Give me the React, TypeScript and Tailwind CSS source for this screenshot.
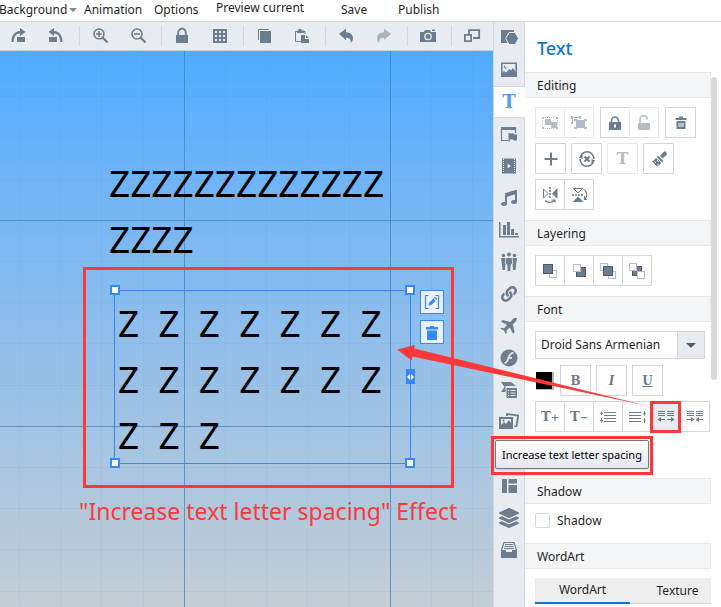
import React from 'react';
import { FaLayerGroup, FaLink, FaMusic } from 'react-icons/fa';

type IconProps = { children: React.ReactNode; className?: string };

const Icon = ({ children, className = 'h-5 w-5' }: IconProps) => (
    <svg viewBox="0 0 20 20" className={`shrink-0 ${className}`} fill="currentColor" aria-hidden="true">
        {children}
    </svg>
);

const SerifT = ({ suffix = '', className = 'text-[16px]' }: { suffix?: string; className?: string }) => (
    <span className={`font-['DejaVu_Serif',serif] font-bold leading-none ${className}`}>
        T{suffix && <span className="text-[10px]">{suffix}</span>}
    </span>
);

/* ---------- top bars ---------- */

const ZoomGlass = ({ plus = false }: { plus?: boolean }) => (
    <Icon>
        <circle cx="9" cy="8" r="5" fill="none" stroke="currentColor" strokeWidth="1.6" />
        <path d="M12.5 11.5l5 5" stroke="currentColor" strokeWidth="2.2" />
        <path d={plus ? 'M6 8h6M9 5v6' : 'M6 8h6'} stroke="currentColor" strokeWidth="1.6" />
    </Icon>
);

const curvedArrow = 'M3 8l7-5.500v3.700c4.500.2 7 2.600 7 6 0 2-.8 3.600-2.400 4.800.6-3.400-.8-5-4.600-5.200V14z';

const toolGroups = [
    [
        {
            name: 'Rotate right',
            icon: <Icon><path d="M9 11h8v5H9zM12 2l5.500 4-5.500 4V7.400C8 7.500 6 10.500 5.700 16H3.500C3.500 9.500 6.500 5.400 12 5z" /></Icon>,
        },
        {
            name: 'Rotate left',
            icon: <Icon><path d="M3 11h8v5H3zM8 2L2.500 6 8 10V7.400c4 .1 6 3.100 6.300 8.600h2.200C16.500 9.500 13.500 5.400 8 5z" /></Icon>,
        },
    ],
    [
        { name: 'Zoom in', icon: <ZoomGlass plus /> },
        { name: 'Zoom out', icon: <ZoomGlass /> },
    ],
    [
        {
            name: 'Lock canvas',
            icon: <Icon><path d="M4 9h12v8H4z" /><path d="M6.200 9V6.500a3.800 3.800 0 0 1 7.600 0V9" fill="none" stroke="currentColor" strokeWidth="1.800" /></Icon>,
        },
        {
            name: 'Grid',
            icon: <Icon><path fillRule="evenodd" d="M3 3h14v14H3zM5 5v2h2V5zM9 5v2h2V5zM13 5v2h2V5zM5 9v2h2V9zM9 9v2h2V9zM13 9v2h2V9zM5 13v2h2v-2zM9 13v2h2v-2zM13 13v2h2v-2z" /></Icon>,
        },
    ],
    [
        { name: 'Copy', icon: <Icon><path d="M6 5h11v12H6z" /><path d="M4.500 14V3.500H15" fill="none" stroke="currentColor" /></Icon> },
        {
            name: 'Paste',
            icon: (
                <Icon>
                    <path d="M9 15.500H3.500V5.500H6M11 5.500h2V8" fill="none" stroke="currentColor" />
                    <path d="M5 4.500h1.500V3h3v1.500H12V7H5zM9 9h4v4h4v4H9zM14 9l3 3h-3z" />
                </Icon>
            ),
        },
    ],
    [
        { name: 'Undo', icon: <Icon><path d={curvedArrow} /></Icon> },
        { name: 'Redo', icon: <Icon className="h-5 w-5 -scale-x-100 opacity-50"><path d={curvedArrow} /></Icon> },
    ],
    [
        {
            name: 'Screenshot',
            icon: (
                <Icon>
                    <path d="M2 6h4l1-2h5l1 2h5v10H2z" />
                    <circle cx="10" cy="10.500" r="3.200" fill="none" stroke="#e8ebf0" strokeWidth="1.300" />
                    <path d="M14 3.500h3V5h-3z" />
                </Icon>
            ),
        },
    ],
    [
        {
            name: 'Window size',
            icon: <Icon><path d="M7 8V4.200h10.200V12H11M2.900 8.900h6.200v6.200H2.900z" fill="none" stroke="currentColor" strokeWidth="1.800" /></Icon>,
        },
    ],
];

const MenuBar = () => (
    <nav className="flex h-[22px] items-start overflow-hidden whitespace-nowrap border-b border-[#d2d6dc] bg-white text-[12px] leading-5 text-[#1f1f1f]">
        <a href="#background" className="-ml-px flex w-[85px] items-center">
            Background
            <svg viewBox="0 0 8 4" className="ml-0.5 h-1 w-2" fill="#7b8794"><path d="M0 0h8L4 4z" /></svg>
        </a>
        <a href="#animation" className="w-[70px]">Animation</a>
        <a href="#options" className="w-[62px]">Options</a>
        <a href="#preview" className="w-[125px] leading-4">Preview current</a>
        <a href="#save" className="w-[57px]">Save</a>
        <a href="#publish">Publish</a>
    </nav>
);

const Toolbar = () => (
    <div className="flex h-[29px] items-center overflow-hidden border-b border-[#c9cfd6] bg-[#e8ebf0] text-[#6b7d8e]">
        <div className="-ml-px flex items-center">
            {toolGroups.map((group, i) => (
                <React.Fragment key={i}>
                    {i > 0 && <span className="ml-1 mr-px h-5 w-px shrink-0 bg-[#d3d7dd]" />}
                    {group.map((tool) => (
                        <button key={tool.name} aria-label={tool.name} className="flex h-7 w-[38px] shrink-0 items-center justify-center">
                            {tool.icon}
                        </button>
                    ))}
                </React.Fragment>
            ))}
        </div>
    </div>
);

/* ---------- canvas ---------- */

const Handle = ({ className }: { className: string }) => (
    <span className={`absolute h-2.5 w-2.5 border-2 border-[#3388ff] bg-white ${className}`} />
);

const Canvas = () => (
    <main className="relative flex-1 overflow-hidden bg-linear-to-b from-[#4fabff] to-[#c4cdd4] font-['Noto_Sans',sans-serif]">
        <svg className="absolute inset-0 h-full w-full" aria-hidden="true">
            <defs>
                <pattern id="grid" x="184" y="169" width="206" height="206" patternUnits="userSpaceOnUse">
                    <path d="M41.500 0v206M82.500 0v206M123.500 0v206M165.500 0v206M0 41.500h206M0 82.500h206M0 123.500h206M0 165.500h206" stroke="#3a7fb8" strokeOpacity=".08" />
                    <path d="M.5 0v206M0 .5h206" stroke="#3a82c0" strokeOpacity=".75" />
                </pattern>
            </defs>
            <rect width="100%" height="100%" fill="url(#grid)" />
        </svg>

        <div className="absolute left-[109px] top-[104px] text-[37px] leading-[56px] text-black">
            ZZZZZZZZZZZZZ<br />ZZZZ
        </div>

        {/* Selected text box */}
        <div className="absolute left-[114px] top-[239px] h-[174px] w-[297px] whitespace-pre border border-[#3388ff] pl-[3px] pt-1 text-[37px] leading-[56px] text-black">
            <div>Z  Z  Z  Z  Z  Z  Z</div>
            <div>Z  Z  Z  Z  Z  Z  Z</div>
            <div>Z  Z  Z</div>
            <Handle className="-left-[5px] -top-1.5" />
            <Handle className="-right-[5px] -top-1.5" />
            <Handle className="-bottom-[5px] -left-[5px]" />
            <Handle className="-bottom-[5px] -right-[5px]" />
            <span className="absolute -right-[5px] top-[78px] flex h-[15px] w-[9px] items-center bg-[#3388ff]">
                <svg viewBox="0 0 9 6" className="h-1.5 w-[9px]" fill="#fff"><path d="M4 0v6L1 3zM5 0v6l3-3z" /></svg>
            </span>
        </div>
        <div className="absolute left-[420px] top-[239px] flex flex-col gap-1.5 text-[#3388ff]">
            <button aria-label="Edit text" className="h-6 w-6 border border-[#3388ff] bg-[#e8f1fd] p-px">
                <Icon>
                    <path d="M6.500 3.500h-3v13h3M13.500 3.500h3v13h-3" fill="none" stroke="currentColor" strokeWidth="1.200" />
                    <path d="M6.500 13.500l.6-2.800 4.200-4.200 2.200 2.200-4.200 4.200zM12 5.800l1-1 2.200 2.200-1 1z" />
                </Icon>
            </button>
            <button aria-label="Delete" className="h-6 w-6 border border-[#3388ff] bg-[#e8f1fd] p-px">
                <Icon><path d="M4 5h4V4h4v1h4v2.500H4zM5 8.500h10v9.500H5z" /></Icon>
            </button>
        </div>

        <p className="absolute left-[79px] top-[445px] whitespace-nowrap text-[23px] leading-[30px] text-[#fc3938]">
            "Increase text letter spacing" Effect
        </p>
    </main>
);

/* ---------- side rail ---------- */

const railItems = [
    {
        name: 'Shapes',
        icon: <Icon><path d="M2 2h13v13H2z" /><path d="M10 4.500h6.200l3.300 6-3.300 6H10l-3.300-6z" stroke="#e8ebf0" /></Icon>,
    },
    {
        name: 'Image',
        icon: (
            <Icon>
                <path d="M2.800 3.300h14.400v13H2.800z" fill="none" stroke="currentColor" strokeWidth="1.600" />
                <path d="M3 16v-3l2-2 2 1.500L10.500 9l1.500 1.500 2-2.500 3 4.500V16zM6 5a1.800 1.800 0 1 0 2.200 2.600A2 2 0 0 1 6 5z" />
            </Icon>
        ),
    },
    { name: 'Text', icon: <SerifT className="text-[18px] text-[#4ba1f5]" /> },
    {
        name: 'Callout',
        icon: <Icon><path d="M9 16.500H2.500v-13h14V9" fill="none" stroke="currentColor" strokeWidth="1.200" /><path d="M2 3h15v3H2zM9.500 9h1.200v.5h4l1 1H18v6h-3l-1-1h-3.300V18H9.500z" /></Icon>,
    },
    {
        name: 'Video',
        icon: (
            <Icon>
                <path d="M3 2.500h14v15H3z" />
                <path d="M4.500 3v14M15.500 3v14" stroke="#e8ebf0" strokeDasharray="1 1" />
                <path d="M8.500 7.500v5l3.500-2.500z" fill="#e8ebf0" />
            </Icon>
        ),
    },
    { name: 'Music', icon: <FaMusic className="h-4 w-4" /> },
    {
        name: 'Chart',
        icon: <Icon><path d="M0 2h1.500v14H0zM0 16h20v1.500H0zM4 5h3v10H4zM8 2h3v13H8zM12 9h3v6h-3zM16 13h3v2h-3z" /></Icon>,
    },
    {
        name: 'Roles',
        icon: (
            <Icon>
                <circle cx="4.500" cy="3.500" r="1.800" />
                <circle cx="15.500" cy="3.500" r="1.800" />
                <circle cx="10" cy="2.500" r="2" />
                <path d="M2 6h4.500l1 2-1.200 5-.3 5H3.500L3 13zM18 6h-4.500l-1 2 1.200 5 .3 5h2.500l.5-5z" />
                <path d="M7 5.500h6l.8 6-1.800 1-.3 7H8.300l-.3-7-1.800-1z" stroke="#e8ebf0" strokeWidth=".8" />
            </Icon>
        ),
    },
    { name: 'Link', icon: <FaLink className="h-4 w-4" /> },
    {
        name: 'Animation path',
        icon: <Icon><path d="M17.500 2c-1.500-.6-3 .5-4 1.500L11.300 6 3.500 4 2 5.500l6 3.600-3 3.200-2.500-.5-1 1L5 14.500 6.800 18l1-1-.3-2.500 3.200-3 3.300 6.200 1.600-1.500-1.800-8L16.300 6c1-1 2-2.600 1.200-4z" /></Icon>,
    },
    {
        name: 'Flash',
        icon: (
            <Icon>
                <circle cx="10" cy="10" r="8.500" />
                <path d="M14.500 4.800c-3.500 0-4.200 2.600-5 5.200-.7 2.600-1.400 4.700-4 5M8.500 9.800H13" fill="none" stroke="#e8ebf0" strokeWidth="1.800" />
            </Icon>
        ),
    },
    {
        name: 'Formula',
        icon: (
            <Icon>
                <path d="M2 2h10l5 4H6.500v6H2l3.500-5z" />
                <path d="M7.500 8H18v10H7.500z" />
                <path d="M9 10.500h1M11.500 10.500h5M9 13h1M11.500 13h5M9 15.500h1M11.500 15.500h5" stroke="#e8ebf0" />
            </Icon>
        ),
    },
    {
        name: 'Gallery',
        icon: (
            <Icon>
                <path d="M8 4V2l11.300 1.500L17.500 14l-2 .5" fill="none" stroke="currentColor" strokeWidth="1.800" />
                <path fillRule="evenodd" d="M0 5h14v12H0zM2 7v6l3-3 2 2 3-4 2 3V7z" />
                <circle cx="4.500" cy="8.500" r="1" />
            </Icon>
        ),
    },
    { name: 'Table', icon: <Icon><path d="M2 3h16v14H2z" /></Icon> },
    { name: 'Layout', icon: <Icon><path d="M3 3h5v14H3zM9.500 3H18v4.500H9.500zM9.500 9H18v8H9.500z" /></Icon> },
    { name: 'Layers', icon: <FaLayerGroup className="h-5 w-5" /> },
    {
        name: 'Archive',
        icon: (
            <Icon>
                <path d="M2.500 10L5 2.500h10L17.500 10" fill="none" stroke="currentColor" strokeWidth="1.200" />
                <path d="M6 4.500h8M5.500 6.500h9M5 8.500h10" stroke="currentColor" />
                <path d="M2 10h5v2h6v-2h5v8H2z" />
            </Icon>
        ),
    },
];

const Rail = () => (
    <aside className="flex w-8 shrink-0 flex-col border-l border-[#d2d6dc] bg-[#e8ebf0] text-[#6b7d8e]">
        {railItems.map((item) => (
            <button
                key={item.name}
                aria-label={item.name}
                className={`flex h-8 shrink-0 items-center justify-center border-r ${
                    item.name === 'Text' ? 'border-y border-y-[#d2d6dc] border-r-white bg-white' : 'border-r-[#d2d6dc]'
                }`}
            >
                {item.icon}
            </button>
        ))}
        <span className="flex-1 border-r border-[#d2d6dc]" />
    </aside>
);

/* ---------- properties panel ---------- */

type ToolButtonProps = {
    label: string;
    children: React.ReactNode;
    muted?: boolean;
    grouped?: boolean;
    active?: boolean;
};

const ToolButton = ({ label, children, muted, grouped, active }: ToolButtonProps) => (
    <button
        aria-label={label}
        disabled={muted}
        className={`flex h-[31px] shrink-0 items-center justify-center border ${
            grouped ? 'w-[29px] border-r-0 last:w-[30px] last:border-r' : 'w-[31px]'
        } ${muted ? 'border-[#e6e8eb] text-[#b4bdc6]' : 'border-[#d2d6dc] text-[#6b7d8e]'} ${active ? 'bg-[#e8ebf0]' : 'bg-white'}`}
    >
        {children}
    </button>
);

const Section = ({ title, children, className = 'pb-2.5' }: { title: string; children: React.ReactNode; className?: string }) => (
    <section>
        <h3 className="h-[26px] border-y border-r border-[#e6e8eb] bg-[#f4f5f7] pl-3 text-[12px] leading-[26px] text-[#1f1f1f]">{title}</h3>
        <div className={`pl-2.5 pt-[9px] ${className}`}>{children}</div>
    </section>
);

const Squares = ({ children }: { children: React.ReactNode }) => (
    <Icon><g stroke="currentColor">{children}</g></Icon>
);

const back = (x: number, y: number) => (
    <rect x={x} y={y} width="7" height="7" fill="#fff" stroke="#b9bcc0" />
);
const front = (x: number, y: number) => (
    <rect x={x} y={y} width="9" height="9" fill="#6b7d8e" stroke="#4c5866" />
);

const EditingSection = () => (
    <Section title="Editing">
        <div className="flex flex-col gap-[5px]">
            <div className="flex gap-1.5">
                <div className="flex">
                    <ToolButton label="Group" muted grouped>
                        <Icon>
                            <path d="M5 6h6v6H5zM11 9h6v6h-6zM2 4h2v2H2zM16 4h2v2h-2zM2 14h2v2H2zM16 14h2v2h-2z" />
                            <path d="M5 4.500h10M5 15.500h10M2.500 7v6M17.500 7v6" stroke="currentColor" strokeDasharray="1 1" />
                        </Icon>
                    </ToolButton>
                    <ToolButton label="Ungroup" muted grouped>
                        <Icon>
                            <path d="M7 8h9v7H7zM2 3h2v3H2zM10 3h2v3h-2zM2 9h2v2H2zM5 6h3v2H5zM15 6h3v2h-3zM5 14h3v2H5zM15 14h3v2h-3z" />
                            <path d="M3 4.500h8M3.500 5v5M7 7.500h9" fill="none" stroke="currentColor" />
                        </Icon>
                    </ToolButton>
                </div>
                <div className="flex">
                    <ToolButton label="Lock" grouped>
                        <Icon>
                            <path fillRule="evenodd" d="M4 9h12v8H4zM9 11.500v3h2v-3z" />
                            <path d="M6.500 9V7.500a3.500 3.500 0 0 1 7 0V9" fill="none" stroke="currentColor" strokeWidth="1.600" />
                        </Icon>
                    </ToolButton>
                    <ToolButton label="Unlock" muted grouped>
                        <Icon>
                            <path d="M4 10h12v7H4z" />
                            <path d="M6 10V6.500a3.700 3.700 0 0 1 7.400 0" fill="none" stroke="currentColor" strokeWidth="1.600" />
                        </Icon>
                    </ToolButton>
                </div>
                <ToolButton label="Delete">
                    <Icon>
                        <path d="M5 5h3V3.500h4V5h3.500v2H4.500V5zM5.500 8h9v8h-9z" />
                        <path d="M8 10v4M10 10v4M12 10v4" stroke="#fff" />
                    </Icon>
                </ToolButton>
            </div>
            <div className="flex gap-[5px]">
                <ToolButton label="Add">
                    <Icon><path d="M9 3.500h2V9h5.500v2H11v5.500H9V11H3.500V9H9z" /></Icon>
                </ToolButton>
                <ToolButton label="Rotate">
                    <Icon>
                        <path d="M15 4.800A7 7 0 0 0 3.500 7.500M3 10a7 7 0 0 0 2.500 5.500M5 15.200A7 7 0 0 0 16.500 12.500M17 10a7 7 0 0 0-2.300-5" fill="none" stroke="currentColor" strokeWidth="1.600" />
                        <path d="M1.500 8.500l4-2.500v4zM18.500 11.500l-4 2.500v-4z" />
                        <path d="M7.500 7.500l5 5M12.500 7.500l-5 5" stroke="currentColor" strokeWidth="2.200" />
                    </Icon>
                </ToolButton>
                <ToolButton label="Text style" muted><SerifT /></ToolButton>
                <ToolButton label="Format painter">
                    <Icon>
                        <path d="M17 2.500l1 3-4.500 4-2.500-2.500 4-4.500zM9 6.500l5.500 5.500-1.500 1.200L7.700 8zM7 8.700l5.300 5.300c-1 1.500-2.800 2.800-4.800 3L3 12c1.500-.3 3-1.600 4-3.300z" />
                        <path d="M5.500 12.500l1.500 1.500M8 11l1.500 1.500M8.500 15l1 1" stroke="#fff" />
                    </Icon>
                </ToolButton>
            </div>
            <div className="flex">
                <ToolButton label="Flip horizontal" grouped>
                    <Icon>
                        <path d="M17.500 3v11L12 8.500z" />
                        <path d="M3.500 4v9L8 8.500z" fill="none" stroke="currentColor" />
                        <path d="M10 2v11" stroke="currentColor" strokeWidth="1.600" strokeDasharray="2 1" />
                        <path d="M5 15.500c2.500 2.500 7 2.500 9.500 0M11.500 15h3.500v2.500" fill="none" stroke="currentColor" strokeWidth="1.200" />
                    </Icon>
                </ToolButton>
                <ToolButton label="Flip vertical" grouped>
                    <Icon>
                        <path d="M3.500 17h11L9 11.500z" />
                        <path d="M4.500 3.500h9L9 8z" fill="none" stroke="currentColor" />
                        <path d="M3 10h12" stroke="currentColor" strokeWidth="1.600" strokeDasharray="2 1" />
                        <path d="M15.500 5c3 2.500 3 7 0 9.500M15.500 11v3.500H18" fill="none" stroke="currentColor" strokeWidth="1.200" />
                    </Icon>
                </ToolButton>
            </div>
        </div>
    </Section>
);

const LayeringSection = () => (
    <Section title="Layering">
        <div className="flex">
            <ToolButton label="Bring to front" grouped><Squares>{back(9.5, 9.5)}{front(3.5, 3.5)}</Squares></ToolButton>
            <ToolButton label="Send to back" grouped><Squares>{front(7.5, 6.5)}{back(4.5, 3.5)}</Squares></ToolButton>
            <ToolButton label="Bring forward" grouped><Squares>{back(2.5, 2.5)}{back(10.5, 10.5)}{front(5.5, 5.5)}</Squares></ToolButton>
            <ToolButton label="Send backward" grouped><Squares>{front(5.5, 5.5)}{back(2.5, 2.5)}{back(10.5, 10.5)}</Squares></ToolButton>
        </div>
    </Section>
);

const FontSection = () => (
    <Section title="Font" className="pb-[46px]">
        <div className="relative mr-1.5">
            <select
                aria-label="Font family"
                className="h-7 w-full appearance-none border border-[#d2d6dc] bg-white pl-[5px] pr-7 text-[12px] leading-[26px] text-[#1f1f1f]"
            >
                <option>Droid Sans Armenian</option>
            </select>
            <span className="pointer-events-none absolute inset-y-0 right-0 flex w-7 items-center justify-center border border-[#d2d6dc] bg-[#e8ebf0]">
                <svg viewBox="0 0 10 5" className="h-[5px] w-2.5" fill="#555b62"><path d="M0 0h10L5 5z" /></svg>
            </span>
        </div>
        <div className="mt-1.5 flex items-center gap-[5px] font-['DejaVu_Serif',serif] text-[12px]">
            <button aria-label="Text color" className="ml-px mr-px h-[18px] w-[18px] border-b border-r-2 border-[#b5b8bc] bg-black" />
            <ToolButton label="Bold"><b>B</b></ToolButton>
            <ToolButton label="Italic"><i className="font-bold">I</i></ToolButton>
            <ToolButton label="Underline"><u className="font-bold">U</u></ToolButton>
        </div>
        <div className="mt-[5px] flex overflow-hidden">
            <ToolButton label="Increase font size" grouped><SerifT suffix="+" className="text-[13px]" /></ToolButton>
            <ToolButton label="Decrease font size" grouped><SerifT suffix="−" className="text-[13px]" /></ToolButton>
            <ToolButton label="Increase line spacing" grouped>
                <Icon>
                    <path d="M6 5.500h12M6 8.500h12M6 11.500h12M6 14.500h12M3.500 5v3M3.500 11v4" stroke="currentColor" />
                    <path d="M2 7l1.500-3L5 7zM2 13l1.500 3L5 13z" />
                </Icon>
            </ToolButton>
            <ToolButton label="Decrease line spacing" grouped>
                <Icon>
                    <path d="M2 5.500h12M2 8.500h12M2 11.500h12M2 14.500h12M17.500 4v4M17.500 12v4" stroke="currentColor" />
                    <path d="M16 6.500l1.500 2.500L19 6.500zM16 13.500l1.500-2.500 1.500 2.500z" />
                </Icon>
            </ToolButton>
            <ToolButton label="Increase text letter spacing" grouped active>
                <Icon>
                    <path d="M2 4.500h7M11 4.500h7M2 6.500h7M11 6.500h7M2 8.500h7M11 8.500h7M3 12.500h6M11 12.500h6" stroke="currentColor" />
                    <path d="M5 10v5l-3.500-2.500zM15 10v5l3.500-2.500z" />
                </Icon>
            </ToolButton>
            <ToolButton label="Decrease text letter spacing" grouped>
                <Icon>
                    <path d="M2 4.500h7M11 4.500h7M2 6.500h7M11 6.500h7M2 8.500h7M11 8.500h7M2 12.500h6M12 12.500h6" stroke="currentColor" />
                    <path d="M6 10v5l3.500-2.500zM14 10v5l-3.500-2.500z" />
                </Icon>
            </ToolButton>
        </div>
    </Section>
);

const Panel = () => (
    <aside className="flex w-[196px] shrink-0 bg-white">
        <div className="w-[186px]">
            <h2 className="h-[50px] pl-3 text-[18px] font-medium leading-[52px] text-[#0a78d0]">Text</h2>
            <EditingSection />
            <LayeringSection />
            <FontSection />
            <Section title="Shadow" className="pb-[15px]">
                <label className="flex h-[15px] items-center gap-[7px] text-[12px] text-[#1f1f1f]">
                    <input type="checkbox" className="h-[15px] w-[15px] appearance-none rounded-xs border border-[#d2d6dc] bg-white" />
                    Shadow
                </label>
            </Section>
            <Section title="WordArt" className="pb-1">
                <div className="flex h-[26px] border-b border-[#d2d6dc] bg-[#eee] text-[12px] text-[#1f1f1f]">
                    <button className="-mb-px w-[95px] border-b-2 border-[#0a78d2]">WordArt</button>
                    <button className="flex-1 pl-3.5">Texture</button>
                </div>
            </Section>
        </div>
        {/* Scroll thumb */}
        <div className="mt-[55px] h-[303px] w-1.5 rounded-full bg-[#dadada]" />
    </aside>
);

/* ---------- annotations drawn over the window ---------- */

const Annotations = () => (
    <div className="pointer-events-none absolute inset-0">
        <div className="absolute left-[83px] top-[267px] h-[221px] w-[371px] border-3 border-[#fc3938]" />
        <div className="absolute left-[650px] top-[401px] h-8 w-[31px] border-3 border-[#fc3938]" />
        <svg className="absolute left-[397px] top-[340px] h-[70px] w-[252px]" viewBox="0 0 252 70" fill="#fc3938">
            <path d="M0 9.500L18 5l-.8 3.500L249 65.500 15.500 16.500 14.500 20.500z" />
        </svg>
        <div className="absolute left-[491px] top-[436px] border-3 border-[#fc3938] px-px pb-[3px] pt-px">
            <div role="tooltip" className="h-[29px] whitespace-nowrap rounded-xs border border-[#767676] bg-linear-to-b from-white to-[#e4e5f0] px-1.5 text-[11px] leading-[27px] text-black shadow">
                Increase text letter spacing
            </div>
        </div>
    </div>
);

const App = () => (
    <div className="relative flex h-screen flex-col overflow-hidden bg-white font-['Noto_Sans',sans-serif]">
        <MenuBar />
        <div className="flex min-h-0 flex-1">
            <div className="flex min-w-0 flex-1 flex-col">
                <Toolbar />
                <Canvas />
            </div>
            <Rail />
            <Panel />
        </div>
        <Annotations />
    </div>
);

export default App;
